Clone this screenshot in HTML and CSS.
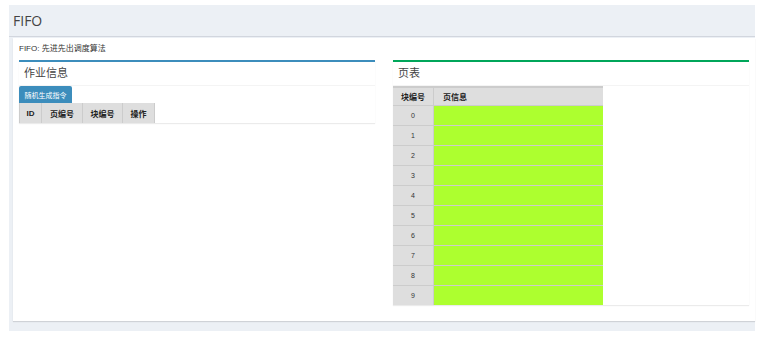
FILE: index.html
```html
<!DOCTYPE html>
<html lang="zh-CN">
<head>
    <meta charset="UTF-8">
    <title>FIFO</title>
    <link rel="stylesheet" href="styles.css">
</head>
<body>
    <div class="content-wrapper">
        <section class="content-header">
            <h1>FIFO</h1>
        </section>
        <section class="content">
            <p class="intro">FIFO: 先进先出调度算法</p>
            <div class="row">
                <div class="box box-primary">
                    <div class="box-header">作业信息</div>
                    <div class="box-body">
                        <button class="btn">随机生成指令</button>
                        <table class="job-table">
                            <thead>
                                <tr>
                                    <th class="col-id">ID</th>
                                    <th class="col-page">页编号</th>
                                    <th class="col-block">块编号</th>
                                    <th class="col-op">操作</th>
                                </tr>
                            </thead>
                            <tbody id="jobs"></tbody>
                        </table>
                    </div>
                </div>
                <div class="box box-success">
                    <div class="box-header">页表</div>
                    <div class="box-body">
                        <table class="page-table">
                            <thead>
                                <tr>
                                    <th class="col-num">块编号</th>
                                    <th class="col-info">页信息</th>
                                </tr>
                            </thead>
                            <tbody id="pages"></tbody>
                        </table>
                    </div>
                </div>
            </div>
        </section>
    </div>

    <script>
        const pages = document.getElementById('pages');
        for (let i = 0; i < 10; i++) {
            const row = document.createElement('tr');
            row.innerHTML = '<td class="num">' + i + '</td><td class="info"></td>';
            pages.appendChild(row);
        }
    </script>
</body>
</html>
```

FILE: styles.css
```css
body {
    margin: 0;
    font-family: "Liberation Sans", "Noto Sans CJK SC", sans-serif;
    color: #333;
    background: #fff;
}

.content-wrapper {
    margin: 5px 0 0 9px;
    width: 746px;
    background: #ecf0f5;
    padding-bottom: 10px;
}

.content-header {
    height: 31px;
    border-bottom: 1px solid #d2d6de;
    display: flex;
    align-items: center;
    padding-left: 4px;
}

.content-header h1 {
    margin: 0;
    font-size: 14px;
    font-weight: normal;
    color: #444;
    font-family: "Open Sans", "Noto Sans CJK SC", sans-serif;
}

.content {
    margin: 1px 0 0 4px;
    height: 271px;
    background: #fff;
    padding: 6px;
    box-shadow: 0 1px 1px rgba(0, 0, 0, 0.12);
}

.intro {
    margin: 0;
    height: 16px;
    line-height: 10px;
    font-size: 8px;
    color: #333;
}

.row {
    display: flex;
    gap: 18px;
    align-items: flex-start;
}

.box {
    width: 356px;
    border-top: 2px solid #3c8dbc;
    background: #fff;
    box-shadow: 0 1px 1px rgba(0, 0, 0, 0.08);
}

.box-success {
    border-top-color: #00a65a;
}

.box-header {
    height: 23px;
    border-bottom: 1px solid #f4f4f4;
    padding-left: 5px;
    font-size: 11px;
    line-height: 23px;
    color: #444;
}

.btn {
    display: block;
    height: 17px;
    width: 53px;
    padding: 0;
    border: none;
    border-radius: 2px 2px 0 0;
    background: #3c8dbc;
    color: #fff;
    font-size: 7px;
    font-family: inherit;
}

table {
    border-collapse: collapse;
    font-size: 8px;
}

.job-table th {
    background: #dedede;
    border-left: 1px solid #ccc;
    border-right: 1px solid #ccc;
    font-weight: bold;
    color: #222;
    height: 20px;
    padding: 0;
}

.col-id { width: 21px; }
.col-page { width: 40px; }
.col-block { width: 39px; }
.col-op { width: 31px; }

.page-table {
    width: 210px;
}

.page-table th {
    background: #dedede;
    height: 17px;
    border-top: 2px solid #ccc;
    font-weight: bold;
    color: #222;
    padding: 0;
}

.page-table .col-num {
    width: 40px;
    text-align: center;
    border-right: 1px solid #ccc;
}

.page-table .col-info {
    text-align: left;
    padding-left: 9px;
}

.page-table td {
    height: 19px;
    padding: 0;
    border-top: 1px solid #ccc;
}

.page-table td.num {
    background: #dedede;
    text-align: center;
    font-size: 7px;
    color: #333;
    border-right: 1px solid #ccc;
}

.page-table td.info {
    background: #adff2f;
}
```
